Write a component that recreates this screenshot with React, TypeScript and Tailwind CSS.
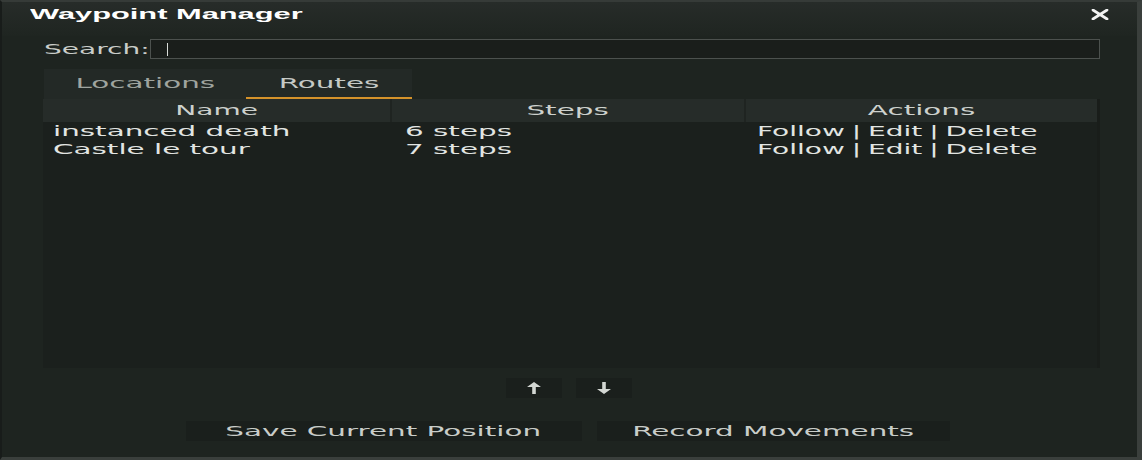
import React from "react";

const routes = [
  { name: "instanced death", steps: "6 steps" },
  { name: "Castle le tour", steps: "7 steps" },
];

// the UI font is very wide, so glyphs get stretched sideways
function Wide({
  children,
  left = false,
  wide = false,
  className = "",
}: {
  children: React.ReactNode;
  left?: boolean;
  wide?: boolean;
  className?: string;
}) {
  return (
    <span
      className={`inline-block whitespace-pre ${wide ? "scale-x-[2.1]" : "scale-x-[2]"} ${left ? "origin-left" : "origin-center"} ${className}`}
    >
      {children}
    </span>
  );
}

function ArrowIcon({ down = false }: { down?: boolean }) {
  return (
    <svg width="18" height="14" viewBox="0 0 18 14" className={down ? "rotate-180" : ""}>
      <path d="M9 1 L16 6 L10.8 6 L10.8 13 L7.2 13 L7.2 6 L2 6 Z" fill="#d3d7d3" />
    </svg>
  );
}

export default function App() {
  return (
    <div
      className="w-[1142px] h-[460px] flex flex-col bg-[#1e2420] border-t-2 border-r-[5px] border-b-[3px] border-l-[2px] border-t-[#363b38] border-r-[#3a3f3c] border-b-[#3a3f3c] border-l-[#181c1a] overflow-hidden"
      style={{ fontFamily: '"DejaVu Sans", sans-serif' }}
    >
      {/* title bar */}
      <div className="h-[34px] shrink-0 flex items-start justify-between pl-[28px] pr-[28px] pt-[3px] bg-gradient-to-b from-[#272c29] to-[#1f2521]">
        <span className="text-[14px] font-bold text-white leading-[18px]" style={{ fontFamily: '"Liberation Sans", Arial, sans-serif' }}>
          <span className="inline-block whitespace-pre origin-left scale-x-[2.2]">Waypoint Manager</span>
        </span>
        <svg width="18" height="11" viewBox="0 0 18 11" className="mt-[4px]">
          <path d="M2 1 L16 10 M16 1 L2 10" stroke="#f2f2f2" strokeWidth="2.8" strokeLinecap="round" />
        </svg>
      </div>

      <div className="flex-1 flex flex-col pl-[41px] pr-[37px]">
        {/* search */}
        <div className="flex items-center h-[20px] mt-[3px]">
          <label className="w-[107px] shrink-0 text-[14px] leading-[20px] text-[#c9cdc9] pl-[1px]">
            <Wide left>Search:</Wide>
          </label>
          <div className="flex-1 h-[20px] bg-[#1a1e1b] border border-[#4c514e] flex items-center pl-[16px]">
            <div className="w-[1px] h-[13px] bg-[#d8dcd8]" />
          </div>
        </div>

        {/* tabs */}
        <div className="flex mt-[10px] ml-[1px] w-[368px] h-[30px] bg-[#232926]">
          <div className="w-[202px] flex items-center justify-center text-[14px] text-[#9fa49f] pb-[2px]">
            <Wide wide>Locations</Wide>
          </div>
          <div className="flex-1 flex items-center justify-center text-[14px] text-[#c6cac6] border-b-[2px] border-[#d4922a]">
            <Wide wide>Routes</Wide>
          </div>
        </div>

        {/* table */}
        <div className="h-[269px] bg-[#1b201d] flex flex-col border-r-[3px] border-[#191d1a]">
          <div className="grid grid-cols-[349px_354px_1fr] h-[23px] text-[14px] text-[#cdd1cd]">
            <div className="bg-[#262c29] border-r-[2px] border-[#1f2421] flex items-center justify-center">
              <Wide>Name</Wide>
            </div>
            <div className="bg-[#262c29] border-r-[2px] border-[#1f2421] flex items-center justify-center">
              <Wide wide>Steps</Wide>
            </div>
            <div className="bg-[#262c29] flex items-center justify-center">
              <Wide wide>Actions</Wide>
            </div>
          </div>
          {routes.map((r) => (
            <div key={r.name} className="grid grid-cols-[349px_354px_1fr] h-[18px] text-[14px] leading-[18px] text-[#e2e5e2]">
              <div className="pl-[10px]">
                <Wide left wide>{r.name}</Wide>
              </div>
              <div className="pl-[13px]">
                <Wide left wide>{r.steps}</Wide>
              </div>
              <div className="pl-[11px]">
                <Wide left className="[word-spacing:-1px]">Follow | Edit | Delete</Wide>
              </div>
            </div>
          ))}
        </div>

        {/* move up / down */}
        <div className="flex justify-center gap-[14px] mt-[10px] pr-[6px]">
          <button className="w-[56px] h-[20px] bg-[#1a1f1c] flex items-center justify-center">
            <ArrowIcon />
          </button>
          <button className="w-[56px] h-[20px] bg-[#1a1f1c] flex items-center justify-center">
            <ArrowIcon down />
          </button>
        </div>

        {/* bottom actions */}
        <div className="flex justify-center gap-[15px] mt-[23px] pr-[8px]">
          <button className="w-[396px] h-[20px] bg-[#1a1f1c] text-[14px] text-[#c9cdc9] flex items-center justify-center">
            <Wide wide>Save Current Position</Wide>
          </button>
          <button className="w-[353px] h-[20px] bg-[#1a1f1c] text-[14px] text-[#c9cdc9] flex items-center justify-center">
            <Wide wide>Record Movements</Wide>
          </button>
        </div>
      </div>
    </div>
  );
}
